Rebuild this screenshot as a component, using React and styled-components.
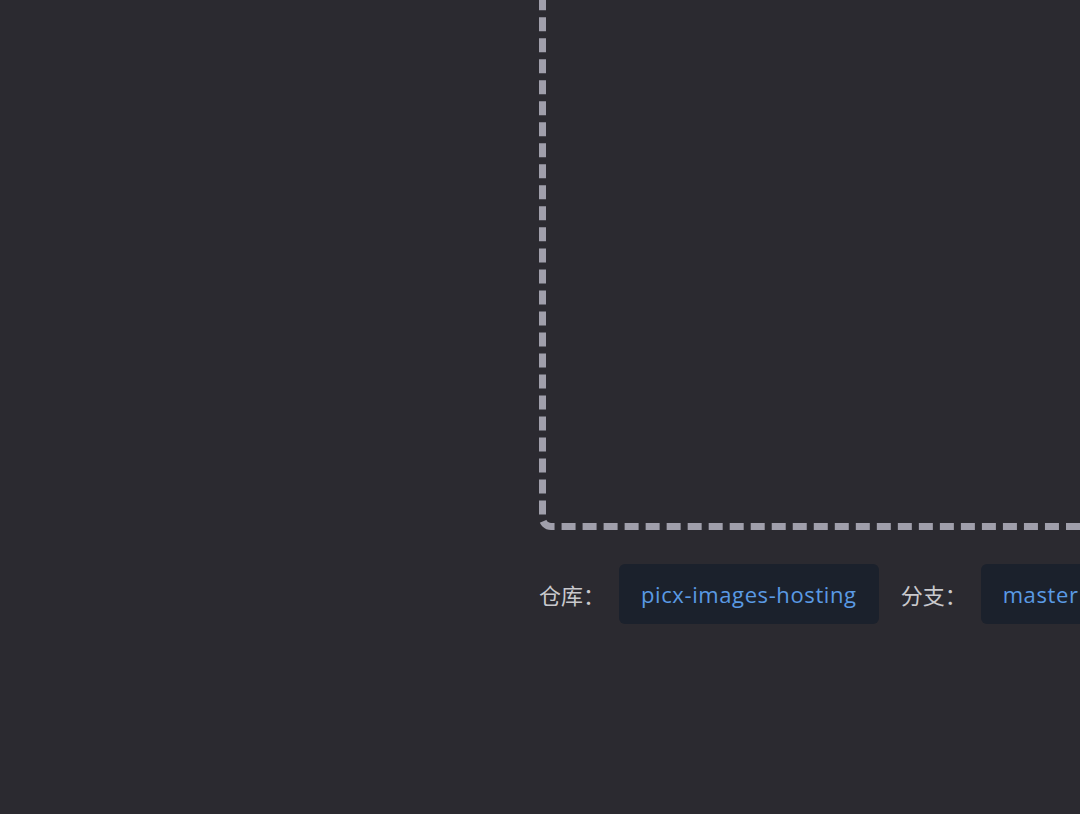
import styled, { createGlobalStyle } from "styled-components";

const GlobalStyle = createGlobalStyle`
  html, body {
    margin: 0;
    padding: 0;
    background: #2b2a30;
    overflow: hidden;
  }
  body {
    font-family: "Open Sans", "Noto Sans", "Noto Sans CJK SC", sans-serif;
  }
`;

const Page = styled.div`
  width: 1080px;
  height: 814px;
  display: grid;
  grid-template-columns: 539px 1fr;
  overflow: hidden;
`;

// content is pinned to the bottom, the top of the drop zone scrolls out of view
const Content = styled.div`
  height: 814px;
  display: flex;
  flex-direction: column;
  justify-content: flex-end;
  gap: 34px;
  padding-bottom: 190px;
  box-sizing: border-box;
  min-width: 0;
`;

const UploadArea = styled.div`
  flex-shrink: 0;
  width: 700px;
  height: 560px;
  border: 7px dashed #a09fab;
  border-radius: 12px;
  box-sizing: border-box;
`;

const InfoRow = styled.div`
  flex-shrink: 0;
  display: flex;
  align-items: center;
  white-space: nowrap;
`;

const Label = styled.span`
  color: #c9c9cd;
  font-size: 22px;
  margin-right: 14px;
  font-family: "Noto Sans CJK SC", sans-serif;
`;

const Tag = styled.span`
  display: inline-flex;
  align-items: center;
  height: 60px;
  padding: 0 22px;
  background: #1b212c;
  border-radius: 6px;
  color: #5a9ae4;
  font-size: 22px;
  letter-spacing: 0.6px;
  margin-right: ${(p) => p.$gap || 0}px;
`;

export default function App() {
  return (
    <>
      <GlobalStyle />
      <Page>
        <div />
        <Content>
          <UploadArea />
          <InfoRow>
            <Label>仓库：</Label>
            <Tag $gap={22}>picx-images-hosting</Tag>
            <Label>分支：</Label>
            <Tag>master</Tag>
          </InfoRow>
        </Content>
      </Page>
    </>
  );
}
